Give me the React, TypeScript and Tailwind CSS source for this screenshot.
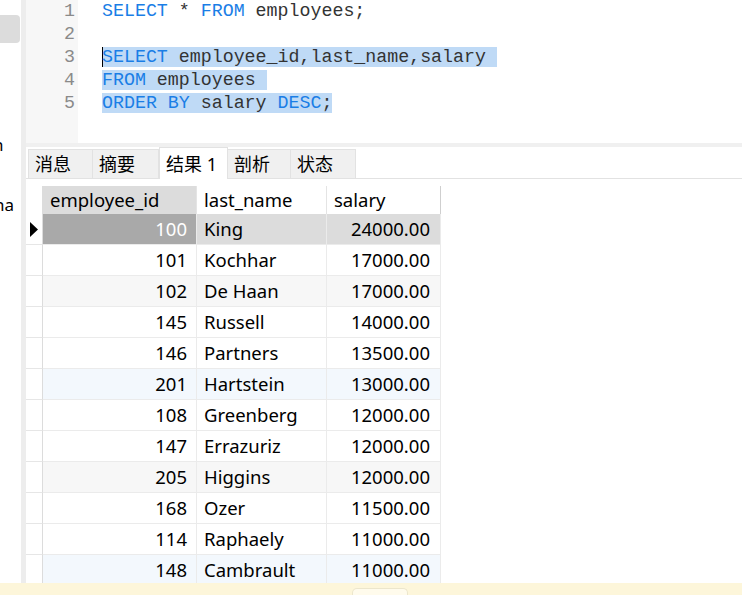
import React from "react";

type Row = { id: number; name: string; salary: string; tone?: "gray" | "blue" | "sel" };

const rows: Row[] = [
  { id: 100, name: "King", salary: "24000.00", tone: "sel" },
  { id: 101, name: "Kochhar", salary: "17000.00" },
  { id: 102, name: "De Haan", salary: "17000.00", tone: "gray" },
  { id: 145, name: "Russell", salary: "14000.00" },
  { id: 146, name: "Partners", salary: "13500.00" },
  { id: 201, name: "Hartstein", salary: "13000.00", tone: "blue" },
  { id: 108, name: "Greenberg", salary: "12000.00" },
  { id: 147, name: "Errazuriz", salary: "12000.00" },
  { id: 205, name: "Higgins", salary: "12000.00", tone: "gray" },
  { id: 168, name: "Ozer", salary: "11500.00" },
  { id: 114, name: "Raphaely", salary: "11000.00" },
  { id: 148, name: "Cambrault", salary: "11000.00", tone: "blue" },
];

const tabs = [
  { label: "消息", w: "w-[65px]" },
  { label: "摘要", w: "w-[66px]" },
  { label: "结果 1", w: "w-[69px]", active: true },
  { label: "剖析", w: "w-[63px]" },
  { label: "状态", w: "w-[65px]" },
];

const kw = "text-[#1a7ee6]";

function Editor() {
  return (
    <div className="flex h-[143px] shrink-0">
      <div className="w-[52px] bg-[#f7f7f7] pr-[3px] text-right text-[#8a8a8a] font-['Liberation_Mono',monospace] text-[18.3px] leading-[23px]">
        {[1, 2, 3, 4, 5].map((n) => (
          <div key={n}>{n}</div>
        ))}
      </div>
      <div className="flex-1 pl-[24px] font-['Liberation_Mono',monospace] text-[18.3px] leading-[23px] text-[#333] whitespace-pre">
        <div>
          <span className={kw}>SELECT</span> * <span className={kw}>FROM</span> employees;
        </div>
        <div>&nbsp;</div>
        <div>
          <span className="bg-[#bfdaf6] shadow-[inset_1px_0_0_#000]">
            <span className={kw}>SELECT</span> employee_id,last_name,salary{" "}
          </span>
        </div>
        <div>
          <span className="bg-[#bfdaf6]">
            <span className={kw}>FROM</span> employees{" "}
          </span>
        </div>
        <div>
          <span className="bg-[#bfdaf6]">
            <span className={kw}>ORDER BY</span> salary <span className={kw}>DESC</span>;
          </span>
        </div>
      </div>
    </div>
  );
}

function Tabs() {
  return (
    <div className="flex h-[32px] shrink-0 items-end border-b border-[#e2e2e2] pl-[2px] font-['Noto_Sans','Noto_Sans_CJK_SC',sans-serif] text-[18px] text-black">
      {tabs.map((t) =>
        t.active ? (
          <div
            key={t.label}
            className={`${t.w} -mb-px flex h-[32px] items-center border-x border-t border-[#e2e2e2] bg-white pl-[6px] leading-none`}
          >
            {t.label}
          </div>
        ) : (
          <div
            key={t.label}
            className={`${t.w} flex h-[29px] items-center border-r border-t border-[#e2e2e2] bg-[#f0f0f0] pl-[6px] leading-none first:border-l`}
          >
            {t.label}
          </div>
        )
      )}
    </div>
  );
}

function Grid() {
  const cell = "border-r border-b border-[#ebebeb] h-[31px] leading-[30px]";
  return (
    <div className="mt-[7px] grid grid-cols-[17px_154px_130px_114px] font-['Noto_Sans',sans-serif] text-[18.5px] text-black">
      <div className="h-[28px] border-r border-[#dcdcdc] bg-white" />
      <div className="h-[28px] bg-[#dcdcdc] pl-[7px] leading-[28px] border-r border-[#e4e4e4]">employee_id</div>
      <div className="h-[28px] bg-white pl-[7px] leading-[28px] border-r border-[#e4e4e4]">last_name</div>
      <div className="h-[28px] bg-white pl-[7px] leading-[28px] border-r border-[#cfcfcf]">salary</div>
      {rows.map((r) => {
        const bg =
          r.tone === "gray" ? "bg-[#f7f7f7]" : r.tone === "blue" ? "bg-[#f3f8fd]" : r.tone === "sel" ? "bg-[#dcdcdc]" : "bg-white";
        return (
          <React.Fragment key={r.id}>
            <div className="flex h-[31px] items-center justify-end border-b border-r border-[#dcdcdc] border-b-[#e6e6e6] bg-white pr-[4px]">
              {r.tone === "sel" && (
                <svg width="8" height="15" viewBox="0 0 8 15">
                  <polygon points="0,0 8,7.5 0,15" fill="#000" />
                </svg>
              )}
            </div>
            <div
              className={`${cell} pr-[9px] text-right ${
                r.tone === "sel" ? "bg-[#a9a9a9] text-white" : bg
              }`}
            >
              {r.id}
            </div>
            <div className={`${cell} pl-[7px] ${bg}`}>{r.name}</div>
            <div className={`${cell} pr-[10px] text-right ${bg}`}>{r.salary}</div>
          </React.Fragment>
        );
      })}
    </div>
  );
}

export default function App() {
  return (
    <div className="flex h-[595px] w-[742px] flex-col overflow-hidden bg-white">
      <div className="flex min-h-0 flex-1 overflow-hidden">
        <aside className="w-[21px] shrink-0 overflow-hidden bg-white font-['Noto_Sans',sans-serif] text-[17px] text-black">
          <div className="mt-[15px] h-[28px] w-[20px] rounded-r-[4px] bg-[#dcdcdc]" />
          <div className="mt-[90px] -ml-[7px] leading-[24px]">n</div>
          <div className="mt-[36px] -ml-[6px] leading-[24px]">na</div>
        </aside>
        <div className="w-[5px] shrink-0 bg-[#ededed]" />
        <main className="flex min-w-0 flex-1 flex-col">
          <Editor />
          <div className="h-[4px] shrink-0 bg-[#f0f0f0]" />
          <Tabs />
          <Grid />
        </main>
      </div>
      <div className="flex h-[12px] shrink-0 bg-[#fdf6da] pl-[352px]">
        <div className="mt-[5px] h-[7px] w-[56px] rounded-t-[5px] border border-b-0 border-[#ece6cc] bg-[#fffbec]" />
      </div>
    </div>
  );
}
